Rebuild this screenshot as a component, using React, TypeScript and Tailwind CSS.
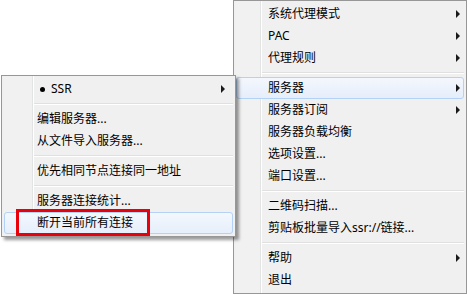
import React from "react";

type Entry =
  | { kind: "item"; label: string; arrow?: boolean; active?: boolean; bullet?: boolean }
  | { kind: "sep" };

const mainItems: Entry[] = [
  { kind: "item", label: "系统代理模式", arrow: true },
  { kind: "item", label: "PAC", arrow: true },
  { kind: "item", label: "代理规则", arrow: true },
  { kind: "sep" },
  { kind: "item", label: "服务器", arrow: true, active: true },
  { kind: "item", label: "服务器订阅", arrow: true },
  { kind: "item", label: "服务器负载均衡" },
  { kind: "item", label: "选项设置..." },
  { kind: "item", label: "端口设置..." },
  { kind: "sep" },
  { kind: "item", label: "二维码扫描..." },
  { kind: "item", label: "剪贴板批量导入ssr://链接..." },
  { kind: "sep" },
  { kind: "item", label: "帮助", arrow: true },
  { kind: "item", label: "退出" },
];

const subItems: Entry[] = [
  { kind: "item", label: "SSR", arrow: true, bullet: true },
  { kind: "sep" },
  { kind: "item", label: "编辑服务器..." },
  { kind: "item", label: "从文件导入服务器..." },
  { kind: "sep" },
  { kind: "item", label: "优先相同节点连接同一地址" },
  { kind: "sep" },
  { kind: "item", label: "服务器连接统计..." },
  { kind: "item", label: "断开当前所有连接", active: true },
];

function Arrow() {
  return (
    <span className="block w-0 h-0 border-y-4 border-y-transparent border-l-4 border-l-[#1a1a1a]" />
  );
}

function MenuItem({
  e,
  textPad,
  arrowPad,
}: {
  e: Extract<Entry, { kind: "item" }>;
  textPad: "main" | "sub";
  arrowPad: "main" | "sub";
}) {
  return (
    <div
      className={
        "h-[22px] flex items-center rounded-[3px] border " +
        (e.active
          ? "border-[#b3d2f5] bg-[linear-gradient(to_bottom,#f4f8fd,#e5eefb)] "
          : "border-transparent ") +
        (textPad === "main" ? "pl-[31px]" : "pl-[32px]")
      }
    >
      {e.bullet && (
        <span className="w-[5px] h-[5px] rounded-full bg-black mr-[6px] ml-[3px]" />
      )}
      <span className="text-[12px] leading-[22px] text-black whitespace-nowrap">{e.label}</span>
      {e.arrow && (
        <span className={"ml-auto " + (arrowPad === "main" ? "mr-[3px]" : "mr-[7px]")}>
          <Arrow />
        </span>
      )}
    </div>
  );
}

function Separator({ gutter }: { gutter: "main" | "sub" }) {
  return (
    <div className={"h-[8px] flex flex-col justify-center " + (gutter === "main" ? "ml-[26px]" : "ml-[30px]")}>
      <div className="h-px bg-[#e0e0e0]" />
      <div className="h-px bg-white" />
    </div>
  );
}

export default function App() {
  return (
    <div
      className="relative w-[470px] h-[295px] bg-white overflow-hidden"
      style={{ fontFamily: '"Noto Sans", "Noto Sans CJK SC", sans-serif' }}
    >
      {/* main context menu */}
      <div className="ml-[233px] w-[234px] border border-[#979797] p-[2px] bg-[linear-gradient(to_right,#f1f1f1_24px,#e2e3e3_24px,#e2e3e3_25px,#ffffff_25px,#ffffff_26px,#f0f0f0_26px)] bg-origin-content">
        {mainItems.map((e, i) =>
          e.kind === "sep" ? (
            <Separator key={i} gutter="main" />
          ) : (
            <MenuItem key={i} e={e} textPad="main" arrowPad="main" />
          )
        )}
      </div>

      {/* submenu */}
      <div className="absolute left-[1px] top-[75px] w-[235px] border border-[#979797] p-[2px] shadow-[3px_3px_3px_rgba(0,0,0,0.4)] bg-[linear-gradient(to_right,#f1f1f1_28px,#e2e3e3_28px,#e2e3e3_29px,#ffffff_29px,#ffffff_30px,#f0f0f0_30px)] bg-origin-content">
        {subItems.map((e, i) =>
          e.kind === "sep" ? (
            <Separator key={i} gutter="sub" />
          ) : (
            <MenuItem key={i} e={e} textPad="sub" arrowPad="sub" />
          )
        )}
      </div>

      {/* red annotation box */}
      <div className="absolute left-[16px] top-[209px] w-[134px] h-[27px] border-[3px] border-[#e8000b]" />
    </div>
  );
}
